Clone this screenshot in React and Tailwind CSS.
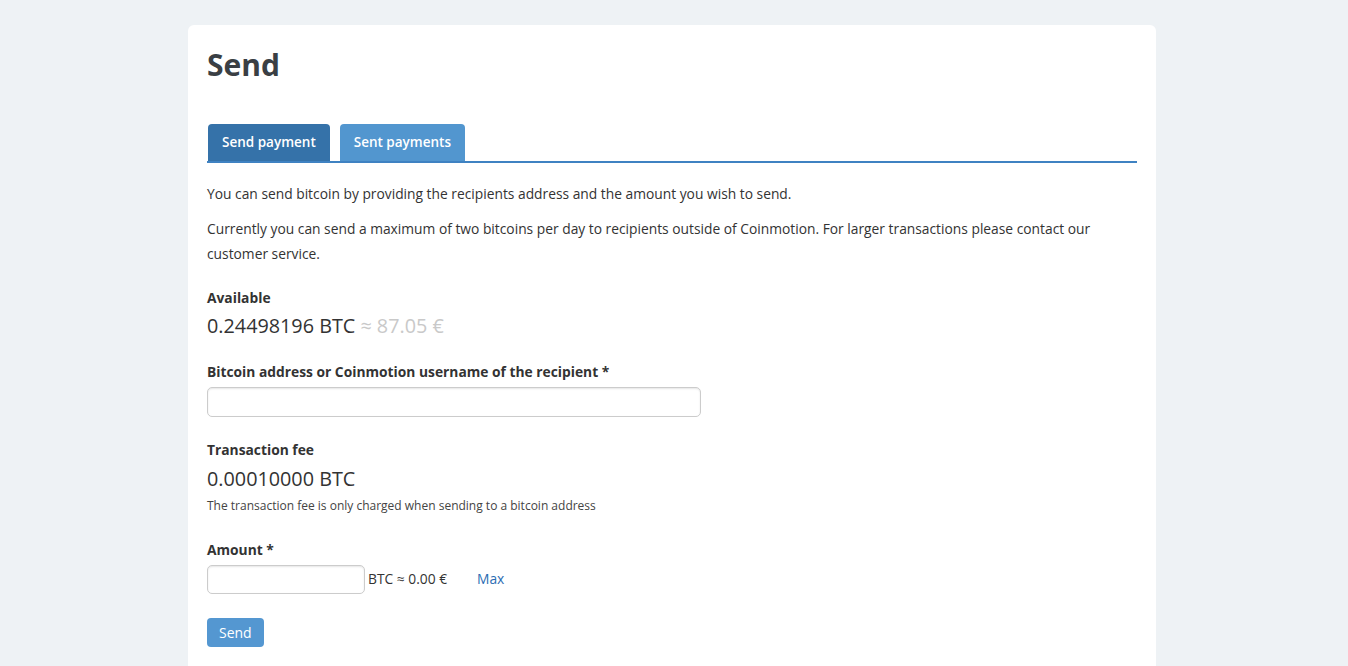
import React from "react";

export default function App() {
  return (
    <div className="min-h-[666px] bg-[#eef2f5] pt-[25px] font-['Open_Sans',sans-serif] text-[#333]">
      <div className="ml-[188px] w-[968px] rounded-t-[6px] bg-white px-[19px] pb-[20px] pt-[20px]">
        <h1 className="text-[30px] font-bold leading-[40px] text-[#3a3f44]">Send</h1>

        <div className="mt-[39px] flex gap-[10px] border-b-2 border-[#3f82c2] pl-px">
          <button className="h-[37px] rounded-t-[4px] bg-[#3572a9] px-[14px] text-[13.5px] font-semibold text-white">
            Send payment
          </button>
          <button className="h-[37px] rounded-t-[4px] bg-[#5296cf] px-[14px] text-[13.5px] font-semibold text-white">
            Sent payments
          </button>
        </div>

        <p className="mt-[18px] text-[13.8px] leading-[25px]">
          You can send bitcoin by providing the recipients address and the amount you wish to send.
        </p>
        <p className="mt-[10px] text-[13.8px] leading-[25px]">
          Currently you can send a maximum of two bitcoins per day to recipients outside of Coinmotion. For larger transactions please contact our customer service.
        </p>

        <div className="mt-[22px] text-[13.8px] font-bold leading-[20px]">Available</div>
        <div className="mt-[6px] text-[19.8px] leading-[24px]">
          0.24498196 BTC <span className="text-[#c9c9c9]">≈ 87.05 €</span>
        </div>

        <div className="mt-[24px] text-[13.8px] font-bold leading-[20px]">
          Bitcoin address or Coinmotion username of the recipient *
        </div>
        <input
          type="text"
          className="mt-[5px] block h-[30px] w-[494px] rounded-[5px] border border-[#ccc] shadow-[inset_0_1px_2px_rgba(0,0,0,0.1)] outline-none"
        />

        <div className="mt-[23px] text-[13.8px] font-bold leading-[20px]">Transaction fee</div>
        <div className="mt-[7px] text-[19.8px] leading-[24px]">0.00010000 BTC</div>
        <div className="mt-[7px] text-[12px] leading-[16px] text-[#444]">
          The transaction fee is only charged when sending to a bitcoin address
        </div>

        <div className="mt-[26px] text-[13.8px] font-bold leading-[20px]">Amount *</div>
        <div className="mt-[5px] flex items-center">
          <input
            type="text"
            className="block h-[29px] w-[158px] rounded-[5px] border border-[#ccc] shadow-[inset_0_1px_2px_rgba(0,0,0,0.1)] outline-none"
          />
          <span className="ml-[3px] text-[13.8px]">BTC ≈ 0.00 €</span>
          <a className="ml-[30px] text-[13.8px] text-[#2b6db3]">Max</a>
        </div>

        <button className="mt-[24px] h-[29px] rounded-[4px] bg-[#5497d1] px-[12px] text-[14px] text-white">
          Send
        </button>
      </div>
    </div>
  );
}
